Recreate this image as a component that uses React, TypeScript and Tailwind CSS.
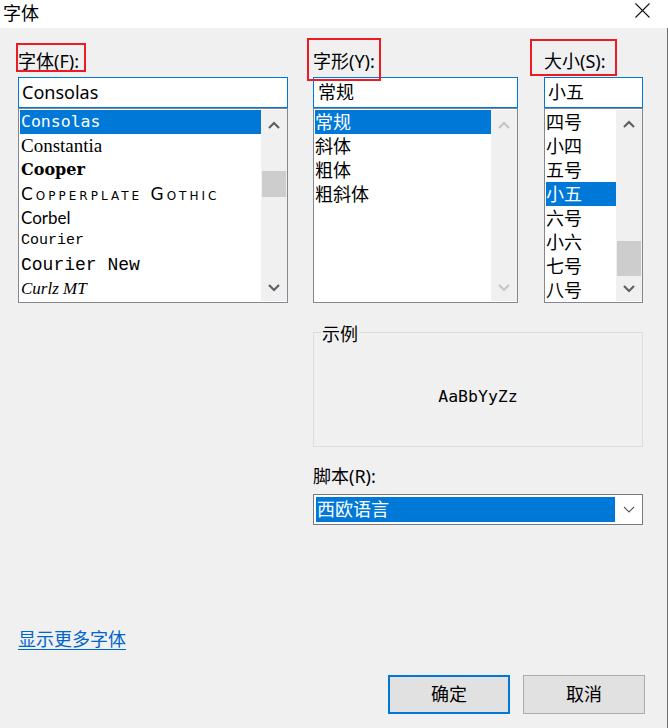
import React from 'react';

function Chevron({ up, color }: { up?: boolean; color: string }) {
  return (
    <svg width="12" height="8" viewBox="0 0 12 8">
      <polyline
        points={up ? '1,7 6,2 11,7' : '1,1 6,6 11,1'}
        fill="none"
        stroke={color}
        strokeWidth="2.2"
      />
    </svg>
  );
}

function ScrollBar({ disabled, thumb }: { disabled?: boolean; thumb?: string }) {
  const c = disabled ? '#c6c6c6' : '#606060';
  return (
    <div className="w-[26px] bg-[#f0f0f0] flex flex-col shrink-0">
      <div className="h-[26px] flex items-center justify-center pt-[3px]">
        <Chevron up color={c} />
      </div>
      <div className="flex-1 px-[1px]">{thumb ? <div className={thumb} /> : null}</div>
      <div className="h-[26px] flex items-center justify-center">
        <Chevron color={c} />
      </div>
    </div>
  );
}

const fontItems: { label: string; cls: string }[] = [
  { label: 'Consolas', cls: "font-['DejaVu_Sans_Mono',monospace] text-[16.5px]" },
  { label: 'Constantia', cls: "font-['Liberation_Serif',serif] text-[19px]" },
  { label: 'Cooper', cls: "font-['DejaVu_Serif',serif] font-bold text-[16px]" },
  { label: 'Copperplate Gothic', cls: "font-['DejaVu_Sans',sans-serif] text-[17px] [font-variant:small-caps] tracking-[3px]" },
  { label: 'Corbel', cls: "font-['Lato',sans-serif] text-[17px]" },
  { label: 'Courier', cls: "font-['Liberation_Mono',monospace] text-[15px]" },
  { label: 'Courier New', cls: "font-['Liberation_Mono',monospace] text-[18px]" },
  { label: 'Curlz MT', cls: "font-['Liberation_Serif',serif] italic text-[17px]" },
];

const styleItems = ['常规', '斜体', '粗体', '粗斜体'];
const sizeItems = ['四号', '小四', '五号', '小五', '六号', '小六', '七号', '八号'];

export default function App() {
  return (
    <div className="relative w-[668px] h-[728px] bg-[#f0f0f0] text-black font-['Noto_Sans','Noto_Sans_CJK_SC',sans-serif] overflow-hidden">
      {/* Title bar */}
      <div className="h-[28px] bg-white flex justify-between">
        <div className="pl-[3px] pt-[1px] text-[18px] leading-[24px]">字体</div>
        <div className="pr-[18px] pt-[3px]">
          <svg width="15" height="15" viewBox="0 0 15 15">
            <line x1="0.5" y1="0.5" x2="14.5" y2="14.5" stroke="#111" strokeWidth="1.1" />
            <line x1="14.5" y1="0.5" x2="0.5" y2="14.5" stroke="#111" strokeWidth="1.1" />
          </svg>
        </div>
      </div>

      {/* Body */}
      <div className="h-[700px] border-r border-[#6e6e6e] pl-[18px] pt-[21px] flex flex-col">
        <div className="flex">
          {/* Font column */}
          <div className="w-[270px] flex flex-col">
            <div className="h-[24px] text-[18px] leading-[24px]">字体(F):</div>
            <div className="mt-[4px] h-[31px] border border-[#0078d7] bg-white pl-[3px] text-[18px] leading-[29px]">
              Consolas
            </div>
            <div className="h-[195px] border border-[#828790] bg-white flex p-[1px] pr-0">
              <div className="flex-1 flex flex-col">
                {fontItems.map((it, i) => (
                  <div
                    key={it.label}
                    className={`h-[24px] leading-[24px] pl-[1px] whitespace-nowrap overflow-hidden ${it.cls} ${
                      i === 0 ? 'bg-[#0078d7] text-white' : 'text-black'
                    }`}
                  >
                    {it.label}
                  </div>
                ))}
              </div>
              <ScrollBar thumb="mt-[35px] h-[26px] bg-[#cdcdcd]" />
            </div>
          </div>

          {/* Style column */}
          <div className="ml-[25px] w-[205px] flex flex-col">
            <div className="h-[24px] text-[18px] leading-[24px]">字形(Y):</div>
            <div className="mt-[4px] h-[31px] border border-[#0078d7] bg-white pl-[4px] text-[18px] leading-[29px]">
              常规
            </div>
            <div className="h-[195px] border border-[#828790] bg-white flex p-[1px] pr-0">
              <div className="flex-1 flex flex-col">
                {styleItems.map((s, i) => (
                  <div
                    key={s}
                    className={`h-[24px] leading-[24px] text-[18px] ${
                      i === 0 ? 'bg-[#0078d7] text-white' : 'text-black'
                    }`}
                  >
                    {s}
                  </div>
                ))}
              </div>
              <ScrollBar disabled />
            </div>
          </div>

          {/* Size column */}
          <div className="ml-[26px] w-[99px] flex flex-col">
            <div className="h-[24px] text-[18px] leading-[24px]">大小(S):</div>
            <div className="mt-[4px] h-[31px] border border-[#0078d7] bg-white pl-[3px] text-[18px] leading-[29px]">
              小五
            </div>
            <div className="h-[195px] border border-[#828790] bg-white flex p-[1px] pr-0">
              <div className="flex-1 flex flex-col">
                {sizeItems.map((s, i) => (
                  <div
                    key={s}
                    className={`h-[24px] leading-[24px] text-[18px] ${
                      i === 3 ? 'bg-[#0078d7] text-white' : 'text-black'
                    }`}
                  >
                    {s}
                  </div>
                ))}
              </div>
              <ScrollBar thumb="mt-[106px] h-[35px] bg-[#cdcdcd]" />
            </div>
          </div>
        </div>

        {/* Sample + script */}
        <div className="ml-[295px] w-[330px] mt-[29px] flex flex-col">
          <div className="relative h-[115px] border border-[#dcdcdc]">
            <div className="absolute left-[7px] top-[-11px] px-[1px] bg-[#f0f0f0] text-[18px] leading-[24px]">
              示例
            </div>
            <div className="h-full flex items-center justify-center pt-[15px] font-['DejaVu_Sans_Mono',monospace] text-[16.5px]">
              AaBbYyZz
            </div>
          </div>
          <div className="mt-[17px] h-[24px] text-[18px] leading-[24px]">脚本(R):</div>
          <div className="mt-[6px] h-[31px] border border-[#7a7a7a] bg-white flex p-[2px] pr-0">
            <div className="w-[299px] h-[25px] bg-[#0078d7] text-white text-[18px] leading-[25px] pl-[1px]">
              西欧语言
            </div>
            <div className="flex-1 flex items-center justify-center">
              <svg width="12" height="7" viewBox="0 0 12 7">
                <polyline points="1,1 6,6 11,1" fill="none" stroke="#555" strokeWidth="1.1" />
              </svg>
            </div>
          </div>
        </div>

        {/* Link */}
        <div className="mt-[102px] h-[24px] text-[18px] leading-[24px] text-[#0066cc] underline underline-offset-[3px]">
          显示更多字体
        </div>

        {/* Buttons */}
        <div className="mt-[24px] flex justify-end pr-[22px] gap-[13px]">
          <div className="w-[122px] h-[39px] border-2 border-[#0078d7] bg-[#e1e1e1] flex items-center justify-center text-[18px]">
            确定
          </div>
          <div className="w-[122px] h-[39px] border border-[#adadad] bg-[#e1e1e1] flex items-center justify-center text-[18px]">
            取消
          </div>
        </div>
      </div>

      {/* Red annotation boxes */}
      <div className="absolute left-[16px] top-[43px] w-[70px] h-[29px] border-2 border-[#ed1c24]" />
      <div className="absolute left-[307px] top-[38px] w-[74px] h-[43px] border-2 border-[#ed1c24]" />
      <div className="absolute left-[530px] top-[39px] w-[87px] h-[37px] border-2 border-[#ed1c24]" />
    </div>
  );
}
